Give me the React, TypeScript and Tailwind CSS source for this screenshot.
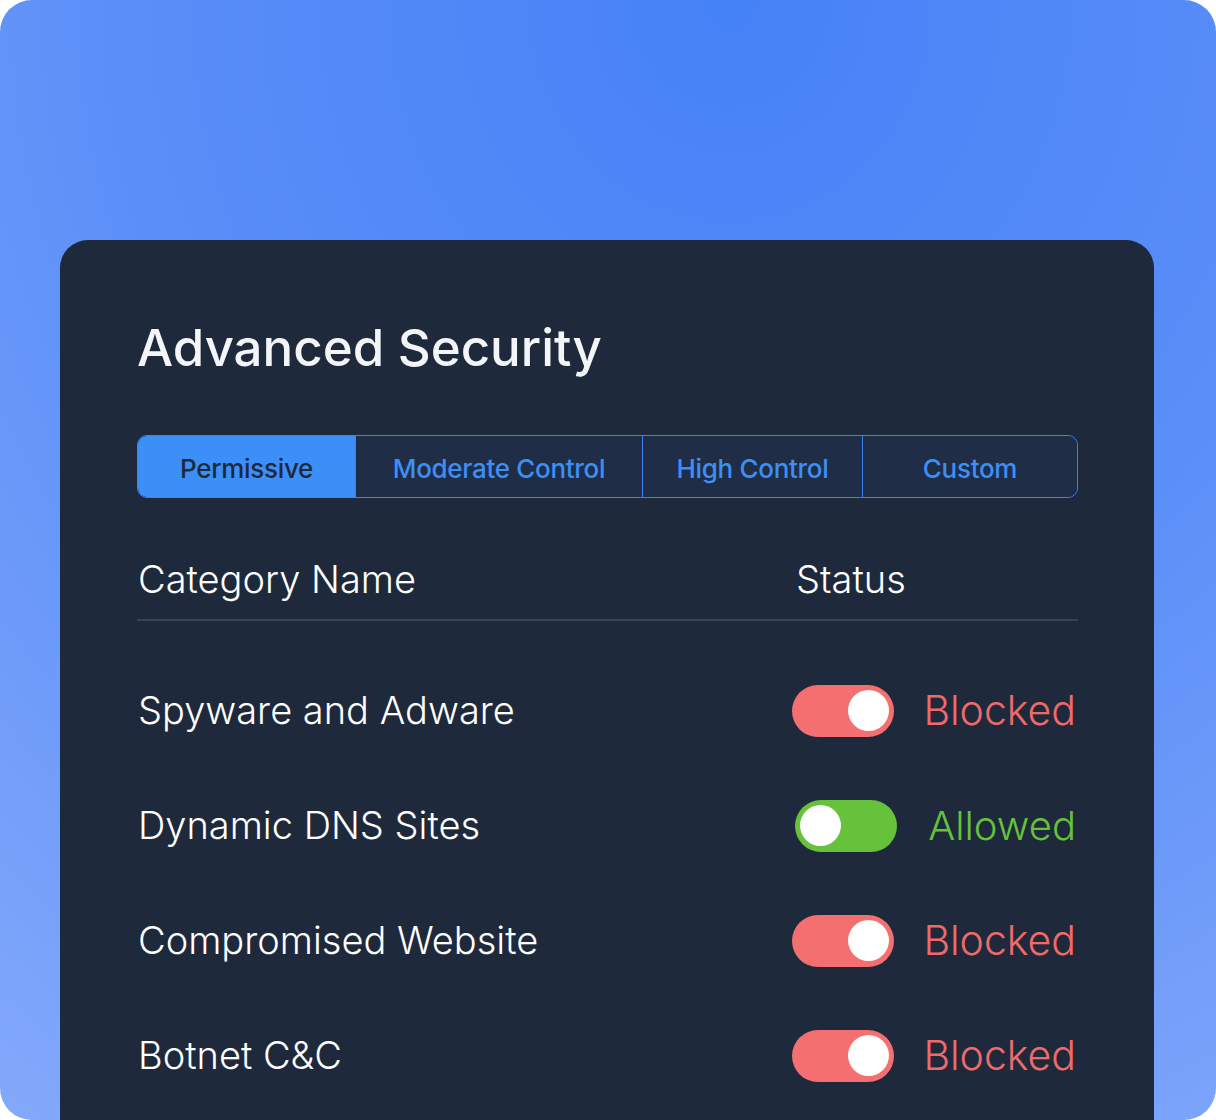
import React from "react";

const rows = [
  { name: "Spyware and Adware", on: false },
  { name: "Dynamic DNS Sites", on: true },
  { name: "Compromised Website", on: false },
  { name: "Botnet C&C", on: false },
];

function Toggle({ allowed }: { allowed: boolean }) {
  return allowed ? (
    <div className="flex h-[52px] w-[102px] items-center justify-start rounded-full bg-[#66c23a] px-[5px]">
      <div className="h-[41px] w-[41px] rounded-full bg-white" />
    </div>
  ) : (
    <div className="flex h-[52px] w-[102px] items-center justify-end rounded-full bg-[#f47070] px-[5px]">
      <div className="h-[41px] w-[41px] rounded-full bg-white" />
    </div>
  );
}

export default function App() {
  const font = { fontFamily: "Inter, 'Open Sans', sans-serif" };
  return (
    <div className="h-[1120px] w-[1216px] bg-white">
      <div
        className="flex h-[1120px] w-[1216px] flex-col overflow-hidden rounded-[32px] bg-[radial-gradient(ellipse_110%_130%_at_60%_0%,#4682f7_0%,#5a8ef8_45%,#88acfb_100%)] pl-[60px] pr-[62px] pt-[240px]"
        style={font}
      >
        <div className="flex-1 rounded-t-[28px] bg-[#1e293b] pl-[77px] pr-[76px] pt-[76px]">
          <h1 className="h-[64px] text-[51px] font-medium leading-[64px] text-[#f3f5f8]">
            Advanced Security
          </h1>
          <div className="mt-[55px] flex h-[63px] overflow-hidden rounded-[10px] border border-[#3b82f6] text-[26px] font-medium tracking-[-0.3px]">
            <div className="flex w-[217px] items-center justify-center bg-[#3d8ff8] pt-[3px] text-[#1e293b]">
              Permissive
            </div>
            <div className="flex w-[287px] items-center justify-center border-l border-[#3b82f6] bg-[#1f2e46] pt-[3px] text-[#3d8ff8]">
              Moderate Control
            </div>
            <div className="flex w-[220px] items-center justify-center border-l border-[#3b82f6] bg-[#1f2e46] pt-[3px] text-[#3d8ff8]">
              High Control
            </div>
            <div className="flex flex-1 items-center justify-center border-l border-[#3b82f6] bg-[#1f2e46] pt-[3px] text-[#3d8ff8]">
              Custom
            </div>
          </div>
          <div className="mt-[42px] flex h-[81px] items-center border-b-2 border-[#374255] text-[38px] font-light text-white">
            <div className="w-[659px] pl-[1px]">Category Name</div>
            <div>Status</div>
          </div>
          <div className="pt-[32px]">
            {rows.map((r) => (
              <div key={r.name} className="flex h-[115px] items-center justify-between text-[38px] font-light text-white">
                <div className="pl-[1px]">{r.name}</div>
                <div className="flex items-center pr-[2px]">
                  <Toggle allowed={r.on} />
                  <span
                    className={
                      r.on
                        ? "ml-[31px] text-[40px] font-light text-[#66c23a]"
                        : "ml-[29px] text-[41px] font-light text-[#f06a6a]"
                    }
                  >
                    {r.on ? "Allowed" : "Blocked"}
                  </span>
                </div>
              </div>
            ))}
          </div>
        </div>
      </div>
    </div>
  );
}
